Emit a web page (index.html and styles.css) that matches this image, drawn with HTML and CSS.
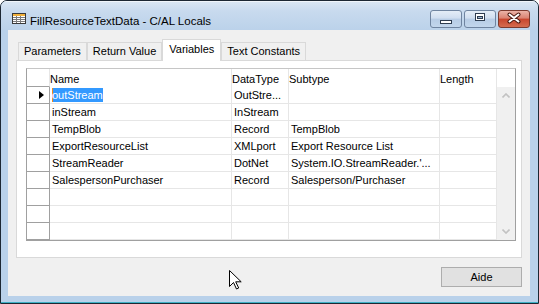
FILE: index.html
```html
<!DOCTYPE html>
<html lang="en">
<head>
    <meta charset="UTF-8">
    <meta name="viewport" content="width=device-width, initial-scale=1.0">
    <title>FillResourceTextData - C/AL Locals</title>
    <link rel="stylesheet" href="styles.css">
</head>
<body>
    <div class="window">
        <div class="titlebar">
            <svg class="app-icon" width="14" height="11" viewBox="0 0 14 11">
                <rect x="0.5" y="0.5" width="13" height="10" fill="#fff" stroke="#3a3a3a"/>
                <rect x="1" y="1" width="12" height="2" fill="#f2b13c"/>
                <path d="M1 4.5h12M1 6.5h12M1 8.5h12M4.5 3v7M8.5 3v7" stroke="#7a7a7a" fill="none"/>
            </svg>
            <span class="title">FillResourceTextData - C/AL Locals</span>
            <div class="caption-buttons">
                <div class="cap">
                    <svg width="30" height="16" viewBox="0 0 30 16">
                        <rect x="9.5" y="9.5" width="11" height="3" fill="#fff" stroke="#2f3d50"/>
                    </svg>
                </div>
                <div class="cap">
                    <svg width="30" height="16" viewBox="0 0 30 16">
                        <rect x="10.5" y="2.5" width="9" height="7" fill="#fff" stroke="#2f3d50"/>
                        <rect x="12.5" y="5.5" width="5" height="2" fill="#9db4cf" stroke="#2f3d50"/>
                    </svg>
                </div>
                <div class="cap close">
                    <svg width="30" height="16" viewBox="0 0 30 16">
                        <path d="M10.5 3.5l9 7M19.5 3.5l-9 7" stroke="#4a1a12" stroke-width="4" stroke-linecap="round"/>
                        <path d="M10.5 3.5l9 7M19.5 3.5l-9 7" stroke="#fff" stroke-width="2" stroke-linecap="round"/>
                    </svg>
                </div>
            </div>
        </div>

        <div class="client">
            <div class="tabs">
                <div class="tab">Parameters</div>
                <div class="tab">Return Value</div>
                <div class="tab active">Variables</div>
                <div class="tab">Text Constants</div>
            </div>

            <div class="panel">
                <div class="grid">
                    <div class="table">
                        <div class="row head">
                            <div class="cell rh"></div>
                            <div class="cell name">Name</div>
                            <div class="cell dtype">DataType</div>
                            <div class="cell sub">Subtype</div>
                            <div class="cell len">Length</div>
                        </div>
                        <div class="row">
                            <div class="cell rh"><span class="pointer"></span></div>
                            <div class="cell name"><span class="selected">outStream</span></div>
                            <div class="cell dtype">OutStre...</div>
                            <div class="cell sub"></div>
                            <div class="cell len"></div>
                        </div>
                        <div class="row">
                            <div class="cell rh"></div>
                            <div class="cell name">inStream</div>
                            <div class="cell dtype">InStream</div>
                            <div class="cell sub"></div>
                            <div class="cell len"></div>
                        </div>
                        <div class="row">
                            <div class="cell rh"></div>
                            <div class="cell name">TempBlob</div>
                            <div class="cell dtype">Record</div>
                            <div class="cell sub">TempBlob</div>
                            <div class="cell len"></div>
                        </div>
                        <div class="row">
                            <div class="cell rh"></div>
                            <div class="cell name">ExportResourceList</div>
                            <div class="cell dtype">XMLport</div>
                            <div class="cell sub">Export Resource List</div>
                            <div class="cell len"></div>
                        </div>
                        <div class="row">
                            <div class="cell rh"></div>
                            <div class="cell name">StreamReader</div>
                            <div class="cell dtype">DotNet</div>
                            <div class="cell sub">System.IO.StreamReader.'...</div>
                            <div class="cell len"></div>
                        </div>
                        <div class="row">
                            <div class="cell rh"></div>
                            <div class="cell name">SalespersonPurchaser</div>
                            <div class="cell dtype">Record</div>
                            <div class="cell sub">Salesperson/Purchaser</div>
                            <div class="cell len"></div>
                        </div>
                        <div class="row">
                            <div class="cell rh"></div>
                            <div class="cell name"></div>
                            <div class="cell dtype"></div>
                            <div class="cell sub"></div>
                            <div class="cell len"></div>
                        </div>
                        <div class="row">
                            <div class="cell rh"></div>
                            <div class="cell name"></div>
                            <div class="cell dtype"></div>
                            <div class="cell sub"></div>
                            <div class="cell len"></div>
                        </div>
                        <div class="row">
                            <div class="cell rh"></div>
                            <div class="cell name"></div>
                            <div class="cell dtype"></div>
                            <div class="cell sub"></div>
                            <div class="cell len"></div>
                        </div>
                    </div>
                    <div class="vscroll">
                        <div class="vscroll-head"></div>
                        <div class="track">
                            <svg width="8" height="5" viewBox="0 0 8 5">
                                <path d="M0.5 4.5l3.5-3.5 3.5 3.5" stroke="#c2c2c2" stroke-width="1.6" fill="none"/>
                            </svg>
                            <svg width="8" height="5" viewBox="0 0 8 5">
                                <path d="M0.5 0.5l3.5 3.5 3.5-3.5" stroke="#c2c2c2" stroke-width="1.6" fill="none"/>
                            </svg>
                        </div>
                    </div>
                </div>
            </div>

            <div class="actions">
                <button class="btn">Aide</button>
            </div>
        </div>
    </div>

    <svg class="cursor" width="13" height="20" viewBox="0 0 13 20">
        <path d="M0.5 0.5v16l4-4 3 6.5 2.2-1-3-6.2h5.5z" fill="#fff" stroke="#000" stroke-linejoin="miter"/>
    </svg>
</body>
</html>
```

FILE: styles.css
```css
body {
    margin: 0;
    background: #fff;
    font-family: "Liberation Sans", Arial, sans-serif;
    font-size: 11px;
    color: #000;
}
.window {
    width: 539px;
    height: 304px;
    box-sizing: border-box;
    border: 1px solid #1c2733;
    border-radius: 7px 7px 0 0;
    background: #b9d1ea;
    box-shadow: inset 0 -1px 0 #3fb0c5;
    display: flex;
    flex-direction: column;
    overflow: hidden;
}
.titlebar {
    height: 29px;
    flex: none;
    display: flex;
    align-items: flex-start;
    padding-left: 11px;
    background: linear-gradient(#dbe7f3, #c8daee 10px, #bbd2ea 29px);
    box-shadow: inset 0 1px 0 rgba(255, 255, 255, 0.6);
}
.app-icon {
    margin-top: 12px;
    margin-right: 4px;
}
.title {
    margin-top: 13px;
    line-height: 14px;
    font-size: 11.5px;
}
.caption-buttons {
    margin-left: auto;
    margin-top: 9px;
    margin-right: 8px;
    display: flex;
    gap: 2px;
}
.cap {
    width: 32px;
    height: 18px;
    box-sizing: border-box;
    border: 1px solid #6f84a0;
    border-radius: 3px;
    background: linear-gradient(#e4edf7, #d0def0 45%, #b7cce5 50%, #c2d6ec);
}
.cap svg {
    display: block;
}
.cap.close {
    border-color: #7b3a2e;
    background: linear-gradient(#ebb3a7, #da8271 45%, #c8452d 50%, #d46c4f);
}
.client {
    height: 266px;
    box-sizing: border-box;
    margin: 0 8px 0 7px;
    padding-top: 9px;
    background: #f0f0f0;
    display: flex;
    flex-direction: column;
}
.tabs {
    display: flex;
    align-items: flex-end;
    height: 21px;
    margin-left: 10px;
}
.tab {
    height: 18px;
    box-sizing: border-box;
    border: 1px solid #d9d9d9;
    border-bottom: 0;
    padding: 0 5px;
    line-height: 17px;
    background: #f0f0f0;
    white-space: nowrap;
}
.tab.active {
    height: 22px;
    padding: 0 6px;
    line-height: 19px;
    background: #fff;
    margin-bottom: -1px;
    position: relative;
    z-index: 1;
}
.panel {
    height: 198px;
    box-sizing: border-box;
    margin: 0 8px;
    border: 1px solid #d9d9d9;
    background: #fff;
    padding: 7px 5px 0 9px;
}
.grid {
    display: flex;
    height: 173px;
    box-sizing: border-box;
    border: 1px solid #a0a0a0;
    border-top-color: #c6c6c6;
}
.table {
    width: 470px;
}
.row {
    display: flex;
    height: 17px;
}
.row.head {
    height: 18px;
}
.cell {
    box-sizing: border-box;
    border-right: 1px solid #e6e6e6;
    border-bottom: 1px solid #e6e6e6;
    padding-left: 2px;
    line-height: 16px;
    white-space: nowrap;
    overflow: hidden;
}
.head .cell {
    border-bottom: 0;
    padding: 2px 0 0 0;
}
.rh {
    width: 23px;
    border-color: #a0a0a0;
    display: flex;
    align-items: center;
    padding-left: 12px;
}
.head .rh {
    border-right-color: #e6e6e6;
    border-bottom: 1px solid #a0a0a0;
}
.name { width: 182px; }
.dtype { width: 57px; }
.sub { width: 151px; }
.len { width: 57px; }
.pointer {
    width: 0;
    height: 0;
    border-left: 5px solid #000;
    border-top: 4px solid transparent;
    border-bottom: 4px solid transparent;
}
.selected {
    display: inline-block;
    line-height: 14px;
    background: #3399ff;
    color: #fff;
    box-shadow: inset 1px 0 0 #f08a1c;
}
.vscroll {
    width: 18px;
    display: flex;
    flex-direction: column;
}
.vscroll-head {
    height: 18px;
    flex: none;
}
.track {
    flex: 1;
    background: #f0f0f0;
    display: flex;
    flex-direction: column;
    justify-content: space-between;
    align-items: center;
    padding: 6px 0 6px;
}
.track svg {
    display: block;
}
.actions {
    display: flex;
    justify-content: flex-end;
    margin: 9px 8px 0 0;
}
.btn {
    width: 81px;
    height: 20px;
    box-sizing: border-box;
    border: 1px solid #adadad;
    background: #e1e1e1;
    font-family: "Liberation Sans", Arial, sans-serif;
    font-size: 11px;
    color: #000;
    padding: 0;
}
.cursor {
    position: absolute;
    left: 229px;
    top: 270px;
}
```
